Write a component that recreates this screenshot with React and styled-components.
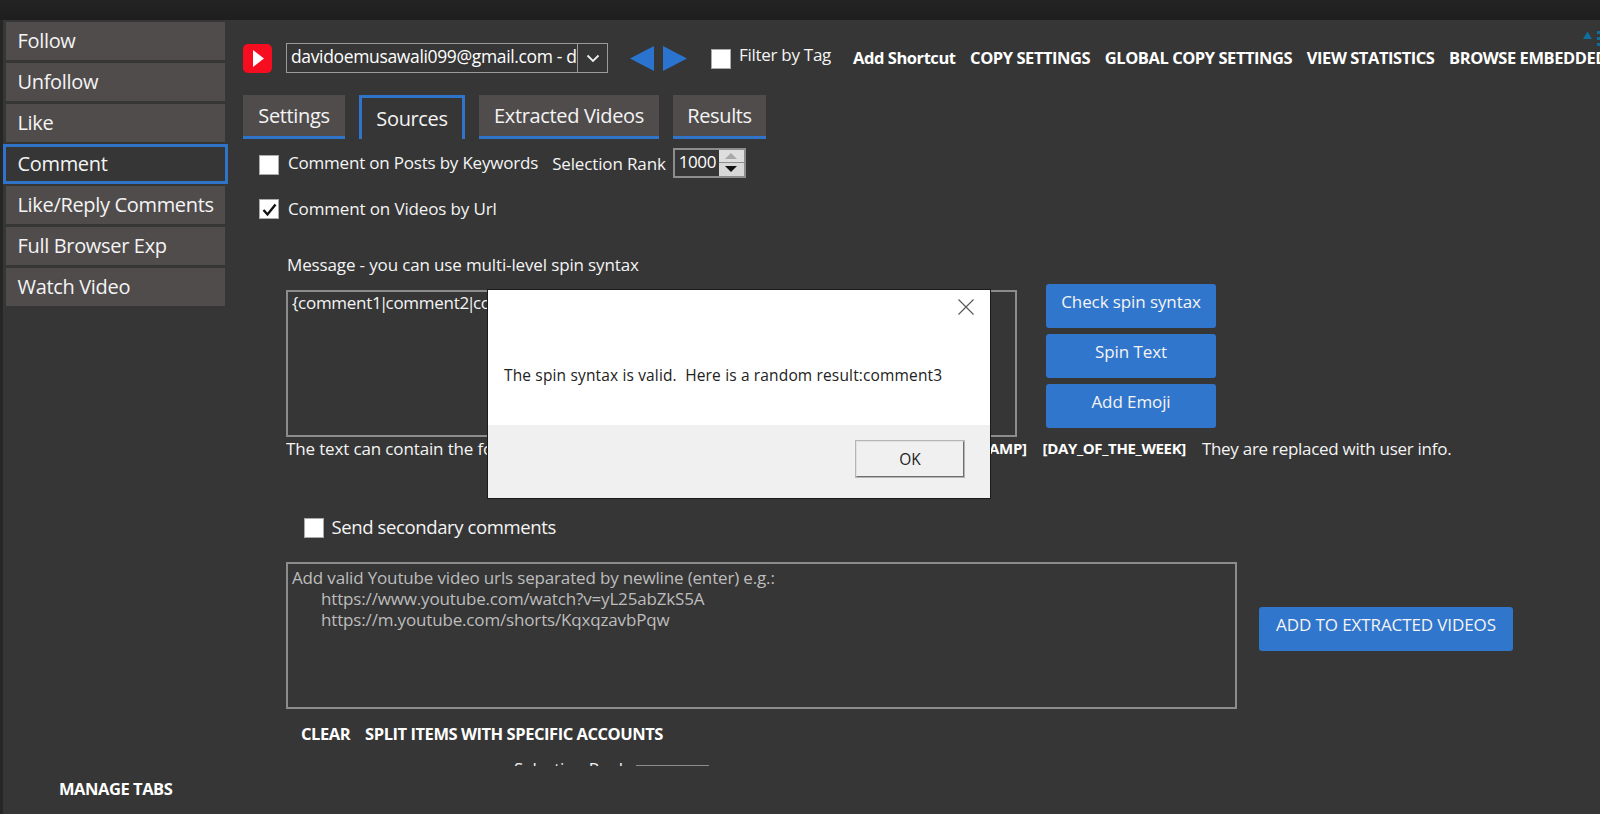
import React from 'react';
import styled, { createGlobalStyle } from 'styled-components';

const Global = createGlobalStyle`
  html, body { margin: 0; padding: 0; height: 100%; background: #363636; overflow: hidden; }
  #root { height: 814px; }
  * { box-sizing: border-box; }
`;

const FONT = `"Open Sans", "Noto Sans", "Liberation Sans", sans-serif`;

const Page = styled.div`
  width: 1600px; height: 814px; display: flex; flex-direction: column;
  background: #363636; color: #fff; font-family: ${FONT}; overflow: hidden;
`;
const TitleBar = styled.div`
  height: 20px; flex: none; background: linear-gradient(#232323, #1e1e1e);
`;
const Body = styled.div`
  flex: 1; display: flex; min-height: 0; position: relative; border-left: 3px solid #262626;
`;
const Sidebar = styled.nav`
  width: 225px; flex: none; display: flex; flex-direction: column; justify-content: space-between;
  padding: 2px 3px 14px 3px;
`;
const NavList = styled.div`
  display: flex; flex-direction: column; gap: 3px;
`;
const NavItem = styled.div`
  height: ${p => (p.$active ? '40px' : '38px')};
  margin: ${p => (p.$active ? '-1px -3px' : '0')};
  padding: ${p => (p.$active ? '0 0 2px 11.5px' : '0 0 2px 11.5px')};
  background: ${p => (p.$active ? '#363636' : '#504c4c')};
  border: ${p => (p.$active ? '3px solid #2f74c8' : 'none')};
  display: flex; align-items: center;
  font-size: 20px; letter-spacing: -0.33px; color: #f4f4f4;
`;
const BoldLink = styled.span`
  font-weight: 700; font-size: 16.5px; letter-spacing: -0.45px; color: #fff; white-space: nowrap; flex: none;
`;
const ManageTabs = styled(BoldLink)`
  margin-left: 53px;
`;
const Main = styled.main`
  flex: 1; min-width: 0; height: 746px; overflow: hidden; padding-left: 15px; position: relative;
`;
const Toolbar = styled.div`
  margin-top: 23px; height: 30px; display: flex; align-items: center; white-space: nowrap;
`;
const Logo = styled.svg`
  width: 29px; height: 29px; flex: none; margin-right: 14px; display: block;
`;
const Select = styled.div`
  width: 322px; height: 30px; flex: none; border: 1.5px solid #9a9a9a; display: flex; align-items: stretch;
`;
const SelectValue = styled.div`
  flex: 1; min-width: 0; overflow: hidden; white-space: nowrap; padding-left: 4px;
  font-size: 17.5px; letter-spacing: -0.35px; line-height: 25px; border-right: 1.5px solid #9a9a9a;
`;
const SelectCaret = styled.div`
  width: 29px; flex: none; display: flex; align-items: center; justify-content: center;
`;
const ArrowButton = styled.svg`
  width: 24px; height: 25px; flex: none; display: block; margin-left: ${p => p.$ml}px;
`;
const Box = styled.span`
  width: 20px; height: 20px; flex: none; background: #fff; border: 1.5px solid #aaa;
  display: flex; align-items: center; justify-content: center;
  margin-top: ${p => p.$mt || 0}px;
`;
const Label = styled.span`
  font-size: 17px; letter-spacing: -0.14px; color: #f4f4f4; white-space: nowrap;
`;
const FilterBox = styled(Box)`
  margin-left: 24px; margin-top: 1px;
`;
const FilterLabel = styled(Label)`
  margin-left: 8px; margin-right: 22px; margin-top: -7px; letter-spacing: -0.28px;
`;
const LinkGroup = styled.div`
  display: flex; gap: 14.6px; flex: none; margin-top: -2px;
`;
const Corner = styled.svg`
  position: absolute; right: 0; top: 11px; width: 18px; height: 18px;
`;
const Tabs = styled.div`
  margin-top: 22px; height: 44px; display: flex; gap: 14px;
`;
const Tab = styled.div`
  width: ${p => p.$w}px; height: 44px; display: flex; justify-content: center; align-items: center;
  font-size: 20px; letter-spacing: -0.35px; color: #f4f4f4;
  background: ${p => (p.$active ? 'transparent' : '#504c4c')};
  border-style: solid; border-color: #2f74c8;
  border-width: ${p => (p.$active ? '3px 3px 0 3px' : '0 0 3px 0')};
`;
const CheckRow = styled.div`
  height: 30px; display: flex; align-items: center; padding-left: 16px; margin-top: ${p => p.$mt || 0}px;
`;
const CheckLabel = styled(Label)`
  margin-left: 9px;
`;
const KeywordLabel = styled(CheckLabel)`
  letter-spacing: -0.2px;
`;
const RankLabel = styled(Label)`
  margin-left: 14px; margin-top: 2px;
`;
const Spinner = styled.div`
  width: 73px; height: 30px; margin-left: 7px; border: 2px solid #8d8d8d; display: flex; margin-top: 1px;
`;
const SpinValue = styled.div`
  flex: 1; font-size: 17px; letter-spacing: -0.4px; line-height: 24px; padding-left: 4px;
`;
const SpinButtons = styled.div`
  width: 25px; flex: none; display: flex; flex-direction: column; background: #8d8d8d; gap: 1px;
`;
const SpinButton = styled.div`
  flex: 1; background: ${p => (p.$dark ? '#d8d8d8' : '#dedede')}; display: flex; align-items: center; justify-content: center;
`;
const SectionLabel = styled(Label)`
  display: block; margin: 30px 0 0 44px; line-height: 24px;
`;
const MessageRow = styled.div`
  margin-top: 7px; display: flex; align-items: flex-start;
`;
const TextBox = styled.div`
  width: ${p => p.$w}px; height: 147px; flex: none; border: 2px solid #8c8c8c; margin-left: 43px;
  margin-top: ${p => p.$mt || 0}px; padding: ${p => p.$pt || 0}px 4px 0; font-size: 17px;
  letter-spacing: ${p => (p.$muted ? '-0.16px' : '-0.28px')};
  line-height: 21px; color: ${p => (p.$muted ? '#bdbdbd' : '#f4f4f4')}; overflow: hidden; white-space: nowrap;
`;
const Pipe = styled.span`
  margin: 0 -2.5px;
`;
const Indented = styled.div`
  padding-left: 29px;
`;
const ActionStack = styled.div`
  margin-left: 29px; display: flex; flex-direction: column; gap: 6px;
`;
const ActionButton = styled.div`
  width: ${p => p.$w || 170}px; height: 44px; background: #3076cc; border-radius: 3px;
  display: flex; justify-content: center; padding-top: 6px; line-height: 24px;
  font-size: 17px; letter-spacing: -0.1px; color: #f4f4f4; white-space: nowrap;
`;
const HelpRow = styled.div`
  margin: -1px 0 0 43px; height: 24px; display: flex; align-items: center; white-space: nowrap;
`;
const HelpLead = styled(Label)`
  width: 542px; flex: none; overflow: hidden;
`;
const HelpToken = styled(BoldLink)`
  font-size: 15px; letter-spacing: -0.35px; margin-right: 16px;
`;
const HelpTail = styled(Label)`
  letter-spacing: -0.28px;
`;
const SecondaryRow = styled.div`
  margin: 53px 0 0 61px; height: 30px; display: flex; align-items: center;
`;
const SecondaryLabel = styled(CheckLabel)`
  font-size: 18.5px; letter-spacing: -0.38px; margin-left: 7.5px; margin-top: -3px;
`;
const UrlRow = styled.div`
  margin-top: 19px; display: flex; align-items: flex-start;
`;
const AddWrap = styled.div`
  margin: 45px 0 0 22px;
`;
const ClearRow = styled.div`
  margin: 12px 0 0 58px; display: flex; gap: 15px; height: 24px; align-items: center;
`;
const ClippedRank = styled.div`
  margin: 12px 0 0 271px; display: flex; align-items: flex-start; gap: 8px;
`;
const RankLine = styled.div`
  width: 73px; height: 1px; margin-top: 8px; background: #8d8d8d;
`;
const DialogBox = styled.div`
  position: absolute; left: 259px; top: 269px; width: 504px; height: 210px;
  background: #fff; border: 1px solid #1b1b1b; display: flex; flex-direction: column; color: #1e1e1e;
`;
const DialogBody = styled.div`
  height: 135px; flex: none; position: relative; padding: 73px 0 0 16px;
  font-size: 15.5px; letter-spacing: 0.15px; line-height: 24px; white-space: pre; color: #222;
`;
const CloseIcon = styled.svg`
  position: absolute; right: 16px; top: 9px; width: 16px; height: 16px;
`;
const DialogFooter = styled.div`
  flex: 1; background: #f0f0f0; display: flex; justify-content: flex-end; padding: 15px 25px 0 0;
`;
const OkButton = styled.div`
  width: 110px; height: 38px; background: #f0f0f0; border: 2px solid; border-color: #e2e2e2 #6e6e6e #6e6e6e #e2e2e2;
  outline: 1px solid #b5b5b5; outline-offset: -1px;
  display: flex; align-items: center; justify-content: center; font-size: 15.5px; color: #1e1e1e;
`;

const Check = () => (
  <svg width="15" height="15" viewBox="0 0 15 15"><path d="M1.5 8 L5.5 12.5 L13.5 2.5" fill="none" stroke="#111" strokeWidth="2.4" /></svg>
);

export default function App() {
  return (
    <Page>
      <Global />
      <TitleBar />
      <Body>
        <Sidebar>
          <NavList>
            <NavItem>Follow</NavItem>
            <NavItem>Unfollow</NavItem>
            <NavItem>Like</NavItem>
            <NavItem $active>Comment</NavItem>
            <NavItem>Like/Reply Comments</NavItem>
            <NavItem>Full Browser Exp</NavItem>
            <NavItem>Watch Video</NavItem>
          </NavList>
          <ManageTabs>MANAGE TABS</ManageTabs>
        </Sidebar>
        <Main>
          <Toolbar>
            <Logo viewBox="0 0 29 29">
              <rect x="0" y="0" width="29" height="29" rx="5" fill="#f60d1f" />
              <path d="M10 6 L21 14.5 L10 23 Z" fill="#fff" />
            </Logo>
            <Select>
              <SelectValue>davidoemusawali099@gmail.com - davidoemusawali</SelectValue>
              <SelectCaret>
                <svg width="14" height="9" viewBox="0 0 14 9"><path d="M1.5 1.5 L7 7 L12.5 1.5" fill="none" stroke="#eee" strokeWidth="1.8" /></svg>
              </SelectCaret>
            </Select>
            <ArrowButton $ml={22} viewBox="0 0 24 25"><path d="M0 12.5 L24 0 V25 Z" fill="#2a74d0" /></ArrowButton>
            <ArrowButton $ml={9} viewBox="0 0 24 25"><path d="M24 12.5 L0 0 V25 Z" fill="#2a74d0" /></ArrowButton>
            <FilterBox />
            <FilterLabel>Filter by Tag</FilterLabel>
            <LinkGroup>
              <BoldLink>Add Shortcut</BoldLink>
              <BoldLink>COPY SETTINGS</BoldLink>
              <BoldLink>GLOBAL COPY SETTINGS</BoldLink>
              <BoldLink>VIEW STATISTICS</BoldLink>
              <BoldLink>BROWSE EMBEDDED</BoldLink>
            </LinkGroup>
          </Toolbar>
          <Corner viewBox="0 0 18 18">
            <path d="M1 8 L5.5 0.5 L10 8 Z" fill="#0e6f9e" />
            <rect x="15" y="0" width="3" height="3" fill="#0e6f9e" />
            <rect x="15" y="6" width="3" height="3" fill="#0e6f9e" />
            <rect x="15" y="12" width="3" height="3" fill="#0e6f9e" />
          </Corner>
          <Tabs>
            <Tab $w={102}>Settings</Tab>
            <Tab $w={106} $active>Sources</Tab>
            <Tab $w={180}>Extracted Videos</Tab>
            <Tab $w={93}>Results</Tab>
          </Tabs>
          <CheckRow $mt={8}>
            <Box $mt={5} />
            <KeywordLabel>Comment on Posts by Keywords</KeywordLabel>
            <RankLabel>Selection Rank</RankLabel>
            <Spinner>
              <SpinValue>1000</SpinValue>
              <SpinButtons>
                <SpinButton>
                  <svg width="12" height="6" viewBox="0 0 12 6"><path d="M6 0 L12 6 H0 Z" fill="#a8a8a8" /></svg>
                </SpinButton>
                <SpinButton $dark>
                  <svg width="12" height="6" viewBox="0 0 12 6"><path d="M0 0 H12 L6 6 Z" fill="#111" /></svg>
                </SpinButton>
              </SpinButtons>
            </Spinner>
          </CheckRow>
          <CheckRow $mt={16}>
            <Box $mt={2}><Check /></Box>
            <CheckLabel>Comment on Videos by Url</CheckLabel>
          </CheckRow>
          <SectionLabel>Message - you can use multi-level spin syntax</SectionLabel>
          <MessageRow>
            <TextBox $w={731} $mt={6}>{'{comment1'}<Pipe>|</Pipe>comment2<Pipe>|</Pipe>{'comment3}'}</TextBox>
            <ActionStack>
              <ActionButton>Check spin syntax</ActionButton>
              <ActionButton>Spin Text</ActionButton>
              <ActionButton>Add Emoji</ActionButton>
            </ActionStack>
          </MessageRow>
          <HelpRow>
            <HelpLead>The text can contain the following placeholders</HelpLead>
            <HelpToken>[USERNAME]</HelpToken>
            <HelpToken>[TIMESTAMP]</HelpToken>
            <HelpToken>[DAY_OF_THE_WEEK]</HelpToken>
            <HelpTail>They are replaced with user info.</HelpTail>
          </HelpRow>
          <SecondaryRow>
            <Box />
            <SecondaryLabel>Send secondary comments</SecondaryLabel>
          </SecondaryRow>
          <UrlRow>
            <TextBox $w={951} $muted $pt={3}>
              Add valid Youtube video urls separated by newline (enter) e.g.:
              <Indented>https://www.youtube.com/watch?v=yL25abZkS5A</Indented>
              <Indented>https://m.youtube.com/shorts/KqxqzavbPqw</Indented>
            </TextBox>
            <AddWrap>
              <ActionButton $w={254}>ADD TO EXTRACTED VIDEOS</ActionButton>
            </AddWrap>
          </UrlRow>
          <ClearRow>
            <BoldLink>CLEAR</BoldLink>
            <BoldLink>SPLIT ITEMS WITH SPECIFIC ACCOUNTS</BoldLink>
          </ClearRow>
          <ClippedRank>
            <Label>Selection Rank</Label>
            <RankLine />
          </ClippedRank>
          <DialogBox>
            <DialogBody>
              {'The spin syntax is valid.  Here is a random result:comment3'}
              <CloseIcon viewBox="0 0 16 16"><path d="M0.5 0.5 L15.5 15.5 M15.5 0.5 L0.5 15.5" stroke="#555" strokeWidth="1.1" fill="none" /></CloseIcon>
            </DialogBody>
            <DialogFooter><OkButton>OK</OkButton></DialogFooter>
          </DialogBox>
        </Main>
      </Body>
    </Page>
  );
}
